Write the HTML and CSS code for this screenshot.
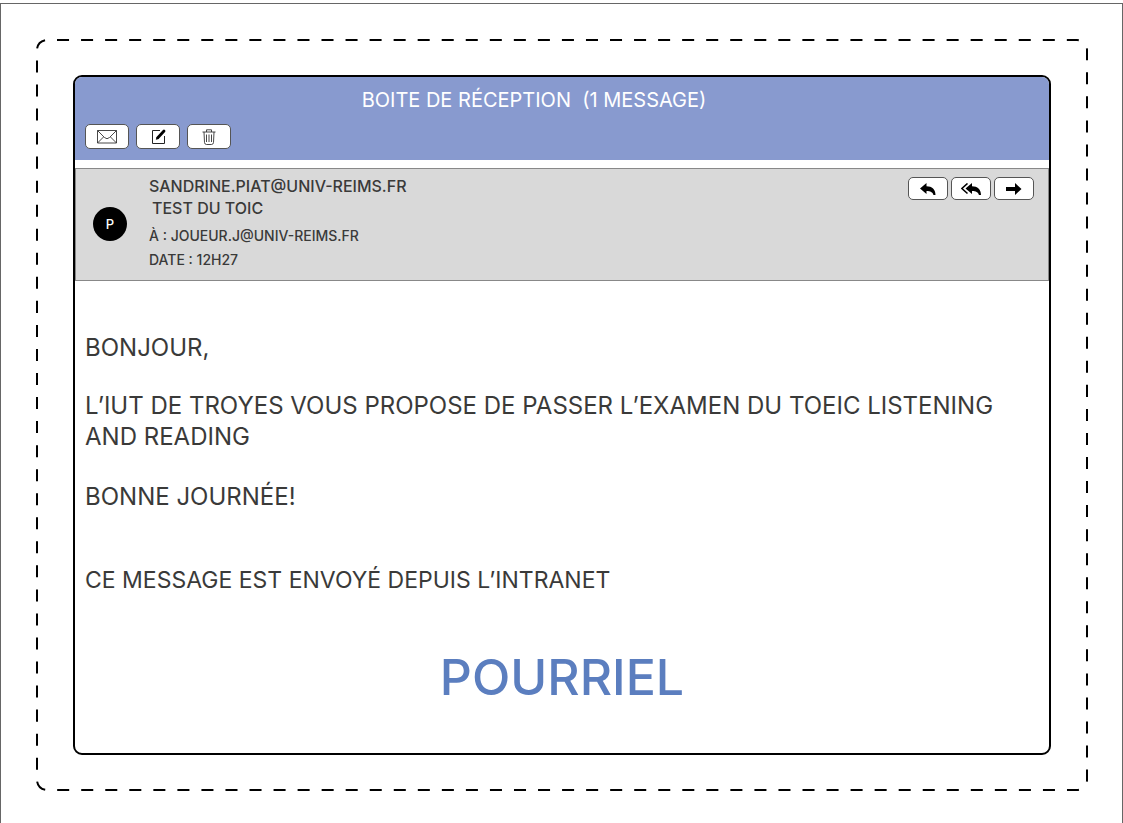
FILE: index.html
```
<!DOCTYPE html>
<html lang="fr">
<head>
<meta charset="utf-8">
<meta name="viewport" content="width=device-width, initial-scale=1">
<title>Boite de réception</title>
<link rel="stylesheet" href="styles.css">
</head>
<body>
<div class="page">
  <div class="frame">
    <svg class="frame-dashes" aria-hidden="true"><rect class="dash-line" rx="10" pathLength="3576"/></svg>
    <main class="card">
      <header class="inbox">
        <h1 class="inbox-title">BOITE DE RÉCEPTION&nbsp; (1 MESSAGE)</h1>
        <div class="toolbar">
          <button class="btn btn-tool" type="button" aria-label="Courrier">
            <svg width="20" height="14" viewBox="0 0 20 14" fill="none" stroke="#333" stroke-width=".9"><path d="M.5.5h19v12.500H.5zM.5.5 7.500 7.500Q10 10 12.500 7.500L19.500.5M.5 13l6-6M19.500 13l-6-6"/></svg>
          </button>
          <button class="btn btn-tool" type="button" aria-label="Écrire">
            <svg width="16" height="16" viewBox="0 0 16 16" fill="none" stroke="#222"><path d="M10 1.500H2.500v13h12V7"/><path d="M8 8.500 14 2" stroke="#000" stroke-width="2.800" stroke-linecap="round"/><path d="m5.800 10.800.8-3 2.300 2.100z" fill="#000" stroke="none"/></svg>
          </button>
          <button class="btn btn-tool" type="button" aria-label="Supprimer">
            <svg width="14" height="16" viewBox="0 0 14 16" fill="none" stroke="#333" stroke-width=".9"><path d="M.5 3h13M4.500 3V.8h5V3M2 3l.5 10.500q.2 2 2 2h5q1.800 0 2-2L12 3M4.500 5.500v7.500M7 5.500v7.500M9.500 5.500v7.500"/></svg>
          </button>
        </div>
      </header>
      <section class="envelope">
        <div class="avatar">P</div>
        <div class="details">
          <p class="sender">SANDRINE.PIAT@UNIV-REIMS.FR</p>
          <p class="subject">TEST DU TOIC</p>
          <p class="meta">À : JOUEUR.J@UNIV-REIMS.FR</p>
          <p class="meta">DATE : 12H27</p>
        </div>
        <div class="actions">
          <button class="btn btn-action" type="button" aria-label="Répondre">
            <svg width="16" height="12" viewBox="0 0 16 12"><path d="M0 5.500 6.500 0v3.200C12 3.400 15.500 6 15.500 12h-2C12.500 9 10.500 8 6.500 8v3z"/></svg>
          </button>
          <button class="btn btn-action" type="button" aria-label="Répondre à tous">
            <svg width="20" height="12" viewBox="0 0 20 12"><path d="M4.500 5.500 11 0v3.200C16.500 3.400 20 6 20 12h-2C17 9 15 8 11 8v3z"/><path d="M6.500.5.900 5.500l5.600 5" fill="none" stroke="#000" stroke-width="1.600"/></svg>
          </button>
          <button class="btn btn-action" type="button" aria-label="Transférer">
            <svg width="16" height="12" viewBox="0 0 16 12"><path d="M0 4h9V0l6.500 6L9 12V8H0z"/></svg>
          </button>
        </div>
      </section>
      <article class="message">
        <p class="greeting">BONJOUR,</p>
        <p class="text">L’IUT DE TROYES VOUS PROPOSE DE PASSER L’EXAMEN DU TOEIC LISTENING<br>AND READING</p>
        <p class="closing">BONNE JOURNÉE!</p>
        <p class="origin">CE MESSAGE EST ENVOYÉ DEPUIS L’INTRANET</p>
        <p class="verdict">POURRIEL</p>
      </article>
    </main>
  </div>
</div>
</body>
</html>
```
FILE: styles.css
```
* { box-sizing: border-box; }
body {
  margin: 0;
  background: #fff;
  color: #3a3a39;
  font-family: Inter, "DejaVu Sans", sans-serif;
  font-weight: 500;
}
h1, p { margin: 0; font-weight: 500; }
.page {
  display: flow-root;
  min-height: calc(100vh - 3px);
  margin-top: 3px;
  border: 1px solid #666;
  border-bottom: 0;
}
.frame {
  position: relative;
  margin: 35px 34px 30px 35px;
  padding: 36px 37px;
}
.frame-dashes {
  position: absolute;
  inset: 0;
  width: 100%;
  height: 100%;
  pointer-events: none;
}
.dash-line {
  x: 1px;
  y: 1px;
  width: calc(100% - 2px);
  height: calc(100% - 2px);
  fill: none;
  stroke: #000;
  stroke-width: 2;
  stroke-dasharray: 12 12;
  stroke-dashoffset: -10;
}
.card {
  border: 2px solid #000;
  border-radius: 9px;
  overflow: hidden;
}
.inbox {
  padding: 8px 10px 11px;
  background: #889acf;
}
.inbox-title {
  padding-right: 56px;
  color: #fff;
  font-size: 20px;
  font-weight: 400;
  line-height: 30px;
  text-align: center;
}
.toolbar {
  display: flex;
  gap: 7px;
  margin-top: 9px;
}
.btn {
  display: flex;
  align-items: center;
  justify-content: center;
  padding: 0;
  border: 1px solid #555;
  border-radius: 5px;
  background: #fff;
}
.btn-tool { width: 44px; height: 25px; }
.btn-action { width: 40px; height: 23px; }
.envelope {
  display: flex;
  align-items: flex-start;
  margin-top: 8px;
  padding: 6px 14px 8px 17px;
  border: 1px solid #888;
  background: #d9d9d9;
}
.avatar {
  width: 34px;
  height: 34px;
  margin-top: 32px;
  border-radius: 50%;
  background: #000;
  color: #fff;
  font-size: 13px;
  line-height: 34px;
  text-align: center;
}
.details { flex: 1; margin-left: 22px; }
.sender, .subject { font-size: 16px; line-height: 22px; }
.subject { padding-left: 3px; }
.meta { font-size: 14px; line-height: 24px; }
.subject + .meta { margin-top: 5px; }
.actions { display: flex; gap: 3px; margin-top: 2px; }
.message {
  padding: 51px 10px 46px;
  font-size: 24px;
  font-weight: 400;
  line-height: 31px;
}
.message p { font-weight: inherit; }
.text { margin-top: 27px; }
.closing { margin-top: 29px; }
.origin { margin-top: 53px; font-size: 23px; }
.message .verdict {
  margin-top: 51px;
  color: #5b7ebf;
  font-size: 50px;
  font-weight: 500;
  line-height: 60px;
  text-align: center;
}
```
